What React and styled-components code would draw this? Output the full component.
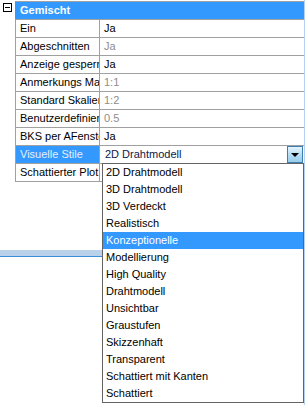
import React from "react";
import styled, { createGlobalStyle } from "styled-components";

const GlobalStyle = createGlobalStyle`
  html, body { margin: 0; padding: 0; background: #fff; }
  body { font-family: "Liberation Sans", Arial, sans-serif; font-size: 11px; }
`;

const rows = [
  { label: "Ein", value: "Ja" },
  { label: "Abgeschnitten", value: "Ja", dim: true },
  { label: "Anzeige gesperrt", value: "Ja" },
  { label: "Anmerkungs Maßstab", value: "1:1", dim: true },
  { label: "Standard Skalierung", value: "1:2", dim: true },
  { label: "Benutzerdefinierter Maßstab", value: "0.5", dim: true },
  { label: "BKS per AFenster", value: "Ja" },
  { label: "Visuelle Stile", value: "2D Drahtmodell", combo: true },
  { label: "Schattierter Plot", value: "" },
];

const options = [
  "2D Drahtmodell",
  "3D Drahtmodell",
  "3D Verdeckt",
  "Realistisch",
  "Konzeptionelle",
  "Modellierung",
  "High Quality",
  "Drahtmodell",
  "Unsichtbar",
  "Graustufen",
  "Skizzenhaft",
  "Transparent",
  "Schattiert mit Kanten",
  "Schattiert",
];

const App = () => {
  return (
    <>
      <GlobalStyle />
      <Page>
        <Palette>
          <TreeColumn>
            <Toggle />
          </TreeColumn>
          <Grid>
            <CategoryRow>Gemischt</CategoryRow>
            {rows.map((r) => (
              <Row key={r.label}>
                <Label $selected={r.combo}>{r.label}</Label>
                <Value $dim={r.dim}>
                  {r.combo ? (
                    <Combo>
                      <ComboText>{r.value}</ComboText>
                      <ComboButton>
                        <Arrow />
                      </ComboButton>
                    </Combo>
                  ) : (
                    r.value
                  )}
                </Value>
              </Row>
            ))}
          </Grid>
        </Palette>
        <Band />
        <DropList>
          {options.map((o) => (
            <Option key={o} $active={o === "Konzeptionelle"}>
              {o}
            </Option>
          ))}
        </DropList>
      </Page>
    </>
  );
};

const Page = styled.div`
  position: relative;
  width: 305px;
  height: 405px;
  overflow: hidden;
  background: #fff;
  box-sizing: border-box;
  border-right: 1px solid #b4d2f0;
  padding-top: 1px;
`;

const Palette = styled.div`
  display: flex;
`;

const TreeColumn = styled.div`
  width: 15px;
  flex: none;
  padding: 2px 0 0 3px;
  box-sizing: border-box;
`;

const Toggle = styled.div`
  position: relative;
  width: 9px;
  height: 9px;
  box-sizing: border-box;
  border: 1px solid #000;
  &::after {
    content: "";
    position: absolute;
    left: 1px;
    right: 1px;
    top: 3px;
    height: 1px;
    background: #000;
  }
`;

const Grid = styled.div`
  flex: 1;
  display: flex;
  flex-direction: column;
  border-top: 1px solid #a0a0a0;
`;

const CategoryRow = styled.div`
  height: 17px;
  line-height: 17px;
  background: #3399ff;
  color: #fff;
  font-weight: bold;
  padding-left: 5px;
  border-bottom: 1px solid #a0a0a0;
`;

const Row = styled.div`
  display: grid;
  grid-template-columns: 84px 1fr;
  height: 17px;
  border-bottom: 1px solid #a0a0a0;
  border-left: 1px solid #a0a0a0;
`;

const Label = styled.div`
  line-height: 17px;
  padding-left: 4px;
  white-space: nowrap;
  overflow: hidden;
  border-right: 1px solid #a0a0a0;
  background: ${(p) => (p.$selected ? "#3399ff" : "#fff")};
  color: ${(p) => (p.$selected ? "#e6eefa" : "#000")};
`;

const Value = styled.div`
  line-height: 17px;
  padding-left: 4px;
  white-space: nowrap;
  overflow: hidden;
  color: ${(p) => (p.$dim ? "#8d8d8d" : "#000")};
`;

const Combo = styled.div`
  display: flex;
  align-items: stretch;
  height: 17px;
  margin-left: -4px;
  padding-left: 5px;
  padding-right: 1px;
`;

const ComboText = styled.div`
  flex: 1;
  color: #0c1a4a;
`;

const ComboButton = styled.div`
  width: 16px;
  box-sizing: border-box;
  border: 1px solid #3c7fb1;
  background: linear-gradient(#e5f3fc, #b3dcf3 55%, #9acde9);
  display: flex;
  align-items: center;
  justify-content: center;
`;

const Arrow = styled.div`
  width: 0;
  height: 0;
  border-left: 4px solid transparent;
  border-right: 4px solid transparent;
  border-top: 4px solid #000;
  margin-top: 1px;
`;

const Band = styled.div`
  width: 102px;
  height: 6px;
  margin-top: 68px;
  background: #b9d1ea;
  border-bottom: 1px solid #3a8fd8;
`;

const DropList = styled.div`
  position: absolute;
  left: 102px;
  top: 163px;
  width: 202px;
  box-sizing: border-box;
  border: 1px solid #646464;
  background: #fff;
  display: flex;
  flex-direction: column;
`;

const Option = styled.div`
  height: 17px;
  line-height: 17px;
  padding-left: 3px;
  white-space: nowrap;
  background: ${(p) => (p.$active ? "#3399ff" : "#fff")};
  color: ${(p) => (p.$active ? "#fff" : "#000")};
`;

export default App;
